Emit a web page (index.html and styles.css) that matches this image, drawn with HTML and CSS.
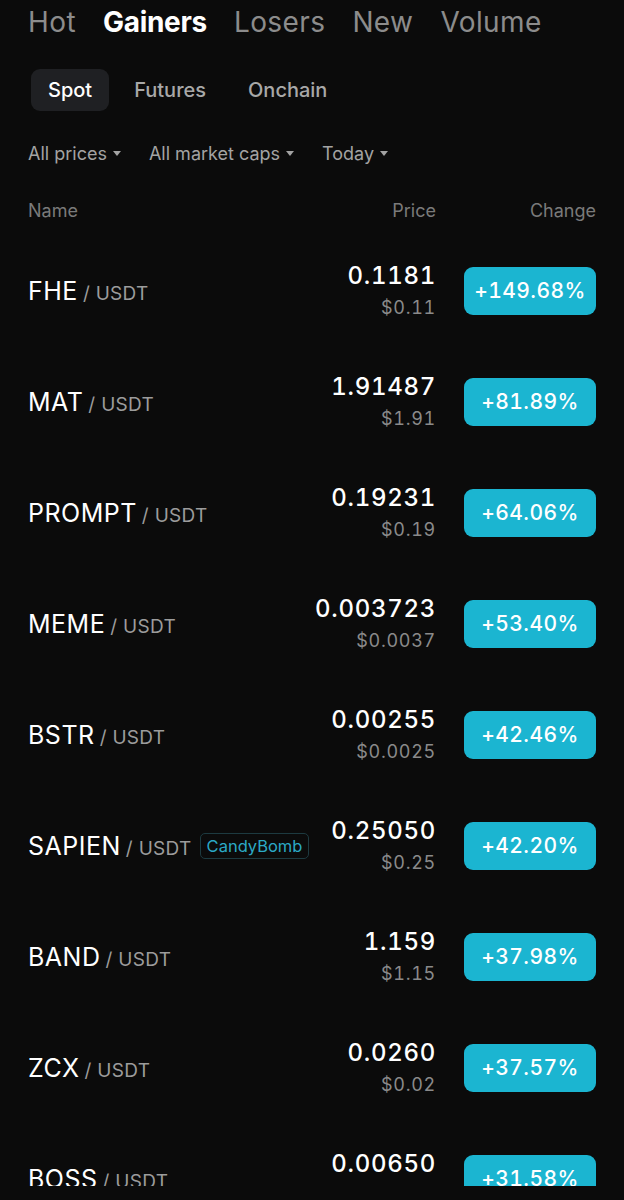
FILE: index.html
```html
<!DOCTYPE html>
<html lang="en">
<head>
  <meta charset="UTF-8">
  <meta name="viewport" content="width=device-width, initial-scale=1.0">
  <title>Markets - Gainers</title>
  <link rel="stylesheet" href="styles.css">
</head>
<body>

  <div class="market">
    <!-- Main Tabs -->
    <div class="tabs">
      <div class="tab">Hot</div>
      <div class="tab active">Gainers</div>
      <div class="tab">Losers</div>
      <div class="tab">New</div>
      <div class="tab">Volume</div>
    </div>

    <!-- Market Type -->
    <div class="segments">
      <div class="segment active">Spot</div>
      <div class="segment">Futures</div>
      <div class="segment">Onchain</div>
    </div>

    <!-- Filters -->
    <div class="filters">
      <div class="filter">All prices <span class="caret"></span></div>
      <div class="filter">All market caps <span class="caret"></span></div>
      <div class="filter">Today <span class="caret"></span></div>
    </div>

    <!-- Column Header -->
    <div class="list-head">
      <div class="col-name">Name</div>
      <div class="col-price">Price</div>
      <div class="col-change">Change</div>
    </div>

    <!-- Coin List -->
    <div class="list">
      <div class="row">
        <div class="pair"><span class="base">FHE</span><span class="quote">/ USDT</span></div>
        <div class="price"><div class="last">0.1181</div><div class="fiat">$0.11</div></div>
        <div class="change">+149.68%</div>
      </div>
      <div class="row">
        <div class="pair"><span class="base">MAT</span><span class="quote">/ USDT</span></div>
        <div class="price"><div class="last">1.91487</div><div class="fiat">$1.91</div></div>
        <div class="change">+81.89%</div>
      </div>
      <div class="row">
        <div class="pair"><span class="base">PROMPT</span><span class="quote">/ USDT</span></div>
        <div class="price"><div class="last">0.19231</div><div class="fiat">$0.19</div></div>
        <div class="change">+64.06%</div>
      </div>
      <div class="row">
        <div class="pair"><span class="base">MEME</span><span class="quote">/ USDT</span></div>
        <div class="price"><div class="last">0.003723</div><div class="fiat">$0.0037</div></div>
        <div class="change">+53.40%</div>
      </div>
      <div class="row">
        <div class="pair"><span class="base">BSTR</span><span class="quote">/ USDT</span></div>
        <div class="price"><div class="last">0.00255</div><div class="fiat">$0.0025</div></div>
        <div class="change">+42.46%</div>
      </div>
      <div class="row">
        <div class="pair"><span class="base">SAPIEN</span><span class="quote">/ USDT</span><span class="tag">CandyBomb</span></div>
        <div class="price"><div class="last">0.25050</div><div class="fiat">$0.25</div></div>
        <div class="change">+42.20%</div>
      </div>
      <div class="row">
        <div class="pair"><span class="base">BAND</span><span class="quote">/ USDT</span></div>
        <div class="price"><div class="last">1.159</div><div class="fiat">$1.15</div></div>
        <div class="change">+37.98%</div>
      </div>
      <div class="row">
        <div class="pair"><span class="base">ZCX</span><span class="quote">/ USDT</span></div>
        <div class="price"><div class="last">0.0260</div><div class="fiat">$0.02</div></div>
        <div class="change">+37.57%</div>
      </div>
      <div class="row">
        <div class="pair"><span class="base">BOSS</span><span class="quote">/ USDT</span></div>
        <div class="price"><div class="last">0.00650</div><div class="fiat">$0.0065</div></div>
        <div class="change">+31.58%</div>
      </div>
    </div>
  </div>

</body>
</html>
```

FILE: styles.css
```css
/* Basic Reset */
* {
  margin: 0;
  padding: 0;
  box-sizing: border-box;
}

body {
  background-color: #0b0b0b;
  color: #fff;
  font-family: Inter, "Noto Sans", sans-serif;
}

.market {
  width: 624px;
}

/* Main Tabs */
.tabs {
  display: flex;
  gap: 27px;
  padding: 0 28px;
  height: 44px;
  align-items: center;
  font-size: 28px;
  color: #8c8c8c;
}

.tab {
  letter-spacing: 0.4px;
}

.tab.active {
  color: #fff;
  font-weight: 700;
  letter-spacing: -0.3px;
}

/* Spot / Futures / Onchain */
.segments {
  display: flex;
  gap: 8px;
  padding: 0 31px;
  margin-top: 25px;
}

.segment {
  height: 42px;
  padding: 0 17px;
  display: flex;
  align-items: center;
  font-size: 20px;
  font-weight: 500;
  color: #a8a8a8;
  border-radius: 9px;
}

.segment.active {
  background-color: #1f2023;
  color: #fff;
}

/* Filters */
.filters {
  display: flex;
  gap: 28px;
  padding: 0 28px;
  height: 42px;
  margin-top: 21px;
  align-items: center;
  font-size: 18px;
  color: #a3a3a3;
}

.filter {
  display: flex;
  align-items: center;
  gap: 6px;
}

.caret {
  width: 0;
  height: 0;
  border-left: 4px solid transparent;
  border-right: 4px solid transparent;
  border-top: 5px solid #a3a3a3;
}

/* Column Header */
.list-head {
  display: grid;
  grid-template-columns: 1fr auto 160px;
  padding: 0 28px;
  height: 42px;
  margin-top: 15px;
  align-items: center;
  font-size: 18px;
  color: #7a7a7a;
}

.list-head .col-price,
.list-head .col-change {
  text-align: right;
}

/* Coin Rows */
.list {
  margin-top: 4px;
  height: 951px;
  overflow: hidden;
}

.row {
  display: grid;
  grid-template-columns: minmax(0, 1fr) auto 132px;
  column-gap: 28px;
  padding: 0 28px;
  height: 111px;
  align-items: center;
}

.pair {
  display: flex;
  align-items: baseline;
  white-space: nowrap;
}

.base {
  font-size: 25px;
  letter-spacing: 0.5px;
}

.quote {
  font-size: 19px;
  color: #9c9c9c;
  margin-left: 5px;
  letter-spacing: 0.3px;
}

.tag {
  align-self: center;
  margin-left: 8px;
  padding: 0 6px;
  height: 26px;
  line-height: 24px;
  font-size: 16.5px;
  color: #2ba9c6;
  border: 1px solid #1d3a40;
  border-radius: 5px;
}

.price {
  text-align: right;
  font-variant-numeric: tabular-nums;
}

.price .last {
  font-size: 24px;
  font-weight: 500;
  line-height: 30px;
  letter-spacing: 0.7px;
}

.price .fiat {
  font-size: 18px;
  color: #8a8a8a;
  line-height: 24px;
  margin-top: 5px;
  letter-spacing: 0.7px;
}

.change {
  height: 48px;
  border-radius: 9px;
  background-color: #1bb5d1;
  display: flex;
  justify-content: center;
  align-items: center;
  font-size: 21px;
  font-weight: 500;
  color: #fff;
  letter-spacing: 0.4px;
  font-variant-numeric: tabular-nums;
}
```
